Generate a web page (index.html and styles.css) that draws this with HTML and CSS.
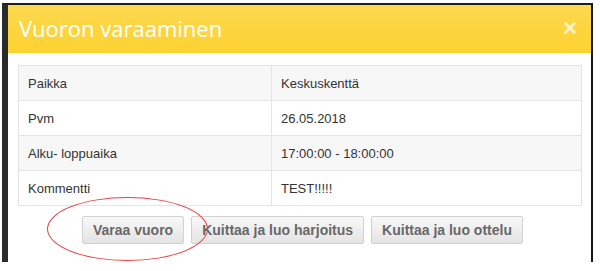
FILE: index.html
```html
<!DOCTYPE html>
<html lang="fi">
<head>
  <meta charset="UTF-8">
  <title>Vuoron varaaminen</title>
  <link rel="stylesheet" href="styles.css">
</head>
<body>
  <div class="frame">
    <div class="modal">
      <div class="modal-header">
        <h2>Vuoron varaaminen</h2>
        <span class="close">&times;</span>
      </div>
      <div class="modal-body">
        <table class="info">
          <tr><td>Paikka</td><td>Keskuskenttä</td></tr>
          <tr><td>Pvm</td><td>26.05.2018</td></tr>
          <tr><td>Alku- loppuaika</td><td>17:00:00 - 18:00:00</td></tr>
          <tr><td>Kommentti</td><td>TEST!!!!!</td></tr>
        </table>
        <div class="actions">
          <button class="btn">Varaa vuoro</button>
          <button class="btn">Kuittaa ja luo harjoitus</button>
          <button class="btn">Kuittaa ja luo ottelu</button>
        </div>
        <div class="circle"></div>
      </div>
    </div>
  </div>
</body>
</html>
```

FILE: styles.css
```css
* {
  margin: 0;
  padding: 0;
  box-sizing: border-box;
}
body {
  background: #fff;
  font-family: "Liberation Sans", Arial, sans-serif;
  color: #333;
  padding: 3px 0 0 2px;
}
.frame {
  width: 591px;
  height: 259px;
  border-top: 2px solid #1e1e1e;
  border-left: 6px solid #2b2b2b;
  border-right: 2px solid #151515;
  background: #fff;
}
.modal {
  height: 100%;
  position: relative;
}
.modal-header {
  height: 48px;
  background: linear-gradient(#fdd950, #fcd22f);
  display: flex;
  align-items: center;
  justify-content: space-between;
  padding: 0 14px 2px 11px;
}
.modal-header h2 {
  font-family: "Open Sans", sans-serif;
  font-weight: normal;
  font-size: 22px;
  color: #fff;
}
.close {
  font-family: "Liberation Sans", Arial, sans-serif;
  font-size: 24px;
  font-weight: bold;
  color: rgba(255,255,255,0.75);
}
.modal-body {
  padding: 12px 9px 0 10px;
}
.info {
  width: 100%;
  border-collapse: collapse;
  font-size: 13px;
  border: 1px solid #e4e4e4;
}
.info td {
  height: 35px;
  padding: 0 9px;
  border: 1px solid #e4e4e4;
}
.info td:first-child {
  width: 253px;
}
.info tr:nth-child(odd) {
  background: #f7f7f7;
}
.actions {
  display: flex;
  justify-content: center;
  gap: 7px;
  margin-top: 10px;
  padding-left: 5px;
}
.btn {
  height: 28px;
  padding: 0 10px;
  font-family: "Liberation Sans", Arial, sans-serif;
  font-size: 14px;
  font-weight: bold;
  color: #686868;
  background: linear-gradient(#f8f8f8, #e4e4e4);
  border: 1px solid #d2d2d2;
  border-radius: 2px;
}
.circle {
  position: absolute;
  left: 39px;
  top: 192px;
  width: 161px;
  height: 64px;
  border: 1.5px solid #e8413f;
  border-radius: 50%;
}
```
